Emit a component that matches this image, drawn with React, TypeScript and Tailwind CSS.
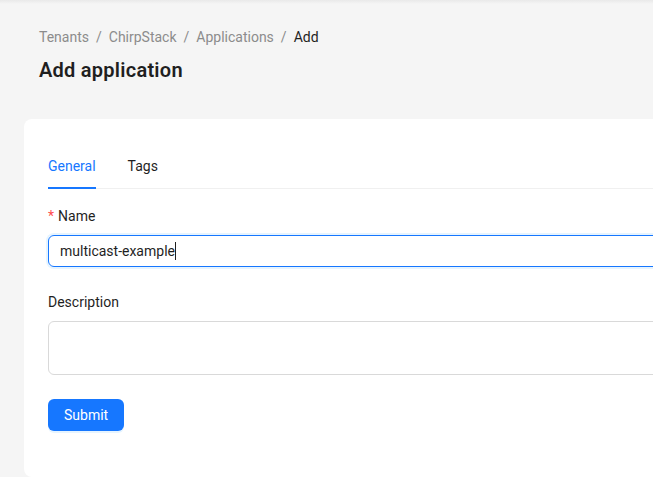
export default function App() {
  return (
    <div
      className="relative min-h-[477px] w-full overflow-hidden bg-[#f5f5f5] text-[14px] text-[#1f1f1f]"
      style={{ fontFamily: 'Roboto, "Noto Sans", sans-serif' }}
    >
      {/* header shadow */}
      <div className="h-[4px] bg-gradient-to-b from-[#e9e9e9] to-[#f5f5f5]" />

      <div className="w-[760px] px-[24px]">
        {/* page header */}
        <div className="pl-[15px] pt-[22px]">
          <nav className="flex items-center leading-[22px] text-[#8c8c8c]">
            <span>Tenants</span>
            <span className="mx-[7px]">/</span>
            <span>ChirpStack</span>
            <span className="mx-[7px]">/</span>
            <span>Applications</span>
            <span className="mx-[7px]">/</span>
            <span className="text-[#1f1f1f]">Add</span>
          </nav>
          <h1 className="mt-[8px] text-[20px] font-semibold leading-[28px] tracking-[0.25px] text-[#1f1f1f]">
            Add application
          </h1>
        </div>

        {/* card */}
        <div className="mt-[35px] rounded-[8px] bg-white p-[24px]">
          {/* tabs */}
          <div className="mb-[16px] flex gap-[32px] border-b border-[#f0f0f0]">
            <div className="relative pb-[11px] pt-[12px] leading-[22px] text-[#1677ff]">
              General
              <div className="absolute bottom-[-1px] left-0 right-0 h-[2px] bg-[#1677ff]" />
            </div>
            <div className="pb-[11px] pt-[12px] leading-[22px]">Tags</div>
          </div>

          {/* name */}
          <div className="mb-[24px]">
            <label className="flex items-center pb-[8px] leading-[22px]">
              <span className="mr-[4px] text-[#ff4d4f]">*</span>
              Name
            </label>
            <div className="flex h-[32px] items-center rounded-[6px] border border-[#1677ff] px-[11px] shadow-[0_0_0_2px_rgba(5,145,255,0.1)]">
              <span className="leading-[22px]">multicast-example</span>
              <span className="h-[18px] w-px bg-[#1f1f1f]" />
            </div>
          </div>

          {/* description */}
          <div className="mb-[24px]">
            <label className="block pb-[8px] leading-[22px]">Description</label>
            <div className="h-[54px] rounded-[6px] border border-[#d9d9d9]" />
          </div>

          <button className="h-[32px] rounded-[6px] bg-[#1677ff] px-[16px] text-white shadow-[0_2px_0_rgba(5,145,255,0.1)]">
            Submit
          </button>
          <div className="h-[22px]" />
        </div>
      </div>
    </div>
  );
}
